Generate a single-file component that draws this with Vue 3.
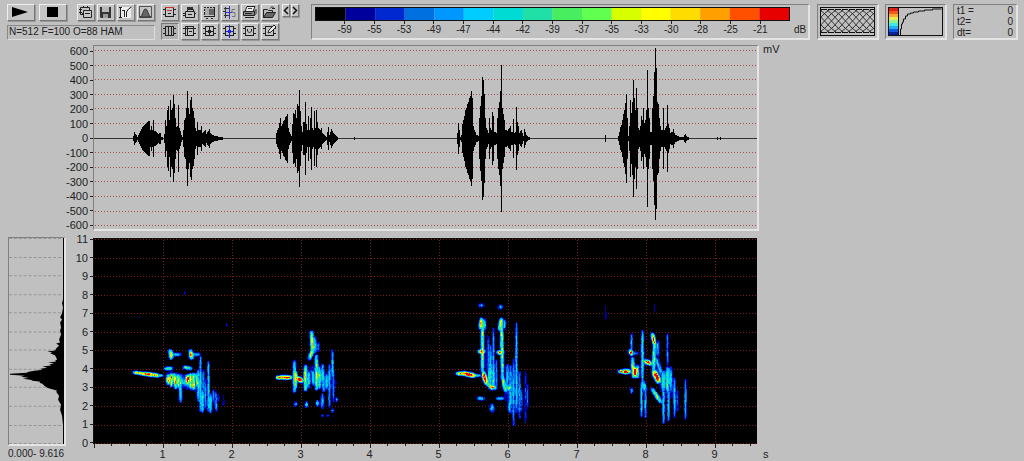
<script setup>
const palette = [
  '#000000', '#00009c', '#0028d0', '#0070e0', '#0098ff', '#00ccff', '#00dcd4', '#20e0a8',
  '#48ee60', '#60ff50', '#d8ff00', '#ffff00', '#ffdc00', '#ffa000', '#ff5000', '#e60000'
]
const levels = [-59, -55, -53, -49, -47, -44, -42, -39, -37, -35, -33, -30, -28, -25, -21]
const amplitudes = [600, 500, 400, 300, 200, 100, 0, -100, -200, -300, -400, -500, -600]
const frequencies = [11, 10, 9, 8, 7, 6, 5, 4, 3, 2, 1, 0]
const seconds = [1, 2, 3, 4, 5, 6, 7, 8, 9]

const ampY = amplitudes.map((_, i) => Math.round(50 + i * 14.6) + 0.5)
const freqY = frequencies.map((_, i) => Math.round(239 + i * 18.55) + 0.5)
const secX = seconds.map((s) => 94.5 + s * 69)
const ticks = Array.from({ length: 39 }, (_, i) => ({ x: Math.round(94 + i * 17.25) + 0.5, h: i % 4 === 0 ? 4 : 2 }))

// Envelope of each call: position, then half height.
const calls = [
  '133:2 134:6 135:4 137:1 139:5 141:9 143:12 145:14 147:16 149:17 150:8 151:12 152:8 153:18 154:7 156:6 158:4 160:5 161:1 163:0 164:4 165:18 166:12 167:28 168:32 169:18 170:38 171:28 172:30 173:43 174:34 175:20 176:11 177:12 178:33 179:10 180:7 181:3 182:1 183:8 184:18 185:20 186:30 187:47 188:30 189:24 190:38 191:41 192:30 193:27 194:20 195:10 196:7 197:16 198:8 200:8 201:12 202:5 205:8 206:4 209:9 210:5 212:3 215:2 219:1 226:0',
  '276:5 277:8 278:10 279:15 280:20 281:12 282:14 283:17 284:18 285:21 286:22 287:24 288:10 289:6 290:4 291:2 292:14 293:25 294:24 295:28 296:20 297:34 298:32 299:48 300:27 301:12 302:6 303:16 304:16 305:36 306:14 307:8 308:22 309:8 310:20 311:31 312:10 313:8 314:27 315:10 316:28 317:16 318:10 319:9 320:8 321:10 322:5 324:3 326:1 328:11 329:3 331:9 333:5 335:3 337:1 338:0',
  '354:1 355:0',
  '457:5 458:15 459:8 460:1 461:3 462:14 463:18 464:22 465:28 466:30 467:34 468:36 469:40 470:42 471:47 472:40 473:12 474:8 475:6 476:3 478:2 479:20 480:32 481:42 482:61 483:58 484:44 485:20 486:10 487:8 488:5 489:20 490:10 491:8 492:26 493:22 494:6 496:5 497:20 498:30 499:36 500:47 501:73 502:30 503:24 504:18 505:8 507:7 509:10 510:12 511:6 512:6 513:19 514:5 515:6 516:31 517:16 518:12 519:5 521:8 523:2 524:9 525:6 526:3 528:1 530:0',
  '604:0 605:3 606:0',
  '618:2 619:6 620:11 621:13 622:18 623:24 624:28 625:35 626:44 627:20 628:2 629:12 630:38 631:25 632:36 633:58 634:40 635:28 636:50 637:30 638:10 639:8 640:12 641:22 642:18 643:30 644:15 645:18 646:28 647:68 648:30 649:20 650:6 651:6 652:30 653:42 654:66 655:90 656:70 657:36 658:34 659:20 660:12 661:8 662:8 663:30 664:8 666:12 667:33 668:14 669:10 670:5 672:6 673:9 674:5 675:3 677:2 680:1 683:1 685:4 686:2 687:1 689:0',
  '716:0 717:1 718:0',
  '719:0 720:1 721:0'
]

function envelope(text) {
  const pts = text.split(' ').map((p) => p.split(':').map(Number))
  let d = ''
  for (let i = 0; i < pts.length; i++) {
    const [x, a] = pts[i]
    const next = pts[i + 1] || [x + 1, 0]
    for (let k = x; k < next[0]; k++) {
      const v = Math.round(a + ((next[1] - a) * (k - x)) / (next[0] - x))
      if (v > 0) d += `M${k} ${138 - v}h1v${v + Math.min(v, 81) + 1}h-1z`
    }
  }
  return d
}
const wave = calls.map(envelope).join('')

// Mean spectrum: row, then bar length.
const spectrumPoints = '239:1 300:1 304:2 308:1 314:2 318:4 320:2 323:4 328:3 331:4 335:3 340:5 343:4 344:8 346:5 349:8 351:9 352:17 353:12 354:14 355:11 356:9 358:8 360:7 361:9 362:8 363:16 364:10 365:15 366:13 367:22 368:17 369:24 370:22 371:30 372:36 373:38 374:55 375:55 376:40 377:44 378:36 379:42 380:34 381:32 382:24 383:25 384:22 386:20 388:17 389:14 390:10 391:7 392:8 396:5 400:6 405:3 410:4 416:2 425:1 444:1'
const spectrum = (() => {
  const pts = spectrumPoints.split(' ').map((p) => p.split(':').map(Number))
  let d = 'M65 239'
  for (const [y, w] of pts) d += `L${65 - w} ${y}`
  return d + 'L65 444z'
})()

// Sound traces: x1, y1, x2, y2, radius, strength.
const traces = [
  [134, 372, 142, 373, 1.6, 0.85], [142, 373, 157, 375, 1.7, 1.15], [157, 375, 162, 375, 1.3, 0.5],
  [170, 351, 171, 357, 2, 0.95], [172, 354, 179, 354, 1.8, 0.42], [190, 351, 191, 357, 2, 0.95], [192, 354, 198, 354, 1.8, 0.42],
  [165, 368, 171, 368, 1.7, 0.62], [184, 367, 190, 368, 1.7, 0.72], [168, 376, 168, 382, 2, 1.05], [171, 374, 171, 385, 1.4, 0.82],
  [174, 374, 175, 387, 1.5, 0.9], [178, 375, 178, 386, 1.5, 0.76], [180, 376, 180, 401, 1.5, 0.48], [187, 376, 187, 382, 1.9, 1.2],
  [190, 374, 190, 387, 1.4, 0.76], [193, 374, 193, 388, 1.5, 0.9], [196, 374, 197, 386, 1.6, 0.6], [198, 370, 198, 400, 1.5, 0.42],
  [200, 357, 200, 410, 1.3, 0.42], [202, 390, 202, 411, 1.4, 0.48], [203, 370, 203, 392, 1.6, 0.27], [205, 380, 205, 408, 1.4, 0.27],
  [208, 362, 208, 410, 1.3, 0.42], [210, 395, 210, 411, 1.6, 0.48], [213, 390, 213, 402, 1.5, 0.27], [215, 392, 216, 410, 1.6, 0.34],
  [218, 394, 218, 400, 1.4, 0.2], [223, 395, 223, 405, 1.3, 0.12], [171, 376, 196, 386, 5, 0.36],
  [277, 377, 290, 377, 1.7, 1.2], [294, 361, 294, 391, 1.6, 0.54], [295, 372, 295, 386, 1.8, 0.8], [297, 378, 301, 380, 2, 1.45],
  [305, 366, 305, 389, 1.7, 0.72], [308, 372, 308, 386, 2, 0.5], [311, 332, 312, 350, 1.7, 0.82], [314, 338, 314, 352, 2, 0.45],
  [312, 350, 309, 358, 1.9, 0.68], [318, 343, 318, 350, 1.5, 0.27], [316, 356, 316, 388, 1.7, 0.7], [319, 368, 319, 387, 1.8, 0.54],
  [312, 370, 313, 384, 1.6, 0.38], [322, 365, 323, 390, 1.7, 0.42], [326, 375, 326, 388, 1.8, 0.35], [329, 365, 329, 406, 1.4, 0.34],
  [332, 350, 332, 376, 1.4, 0.36], [333, 370, 333, 402, 1.3, 0.26], [295, 402, 295, 405, 1.6, 0.4], [306, 402, 306, 406, 1.6, 0.42],
  [317, 401, 317, 405, 1.6, 0.42], [322, 394, 322, 407, 1.6, 0.38], [336, 398, 336, 400, 1.6, 0.4], [332, 409, 332, 411, 1.5, 0.35],
  [322, 415, 322, 415, 1.7, 0.36], [327, 415, 328, 415, 1.4, 0.3], [312, 370, 331, 383, 6, 0.22],
  [457, 373, 462, 373, 1.7, 0.85], [463, 373, 474, 375, 1.9, 1.45], [475, 375, 480, 375, 1.3, 0.5], [480, 305, 482, 305, 2, 0.4],
  [499, 307, 501, 306, 2, 0.4], [480, 327, 481, 319, 1.8, 0.82], [482, 320, 482, 370, 1.6, 0.68], [484, 320, 484, 328, 1.8, 0.42],
  [479, 351, 483, 351, 1.8, 1.05], [483, 373, 486, 382, 2, 1.3], [486, 382, 492, 388, 1.9, 0.66], [490, 387, 494, 387, 2, 0.85],
  [499, 328, 501, 319, 1.8, 0.82], [501, 320, 502, 376, 1.6, 0.68], [504, 320, 504, 328, 1.5, 0.38], [498, 352, 502, 352, 1.8, 1.05],
  [502, 376, 505, 390, 1.9, 0.66], [508, 387, 510, 388, 2.2, 0.82], [478, 398, 483, 398, 1.8, 0.46], [497, 398, 502, 398, 1.6, 0.46],
  [491, 405, 492, 410, 2.2, 0.42], [490, 346, 490, 385, 1.6, 0.34], [493, 328, 493, 384, 1.2, 0.32], [488, 336, 488, 375, 1.6, 0.24],
  [493, 368, 493, 386, 1.7, 0.46], [489, 370, 489, 382, 1.8, 0.48], [496, 360, 496, 388, 1.3, 0.26], [507, 365, 507, 384, 1.8, 0.36],
  [510, 366, 510, 411, 1.6, 0.34], [509, 402, 509, 411, 1.5, 0.42], [513, 360, 513, 424, 1.4, 0.34], [516, 323, 516, 412, 1.2, 0.42],
  [519, 372, 519, 417, 1.5, 0.3], [521, 390, 521, 410, 1.4, 0.22], [525, 370, 525, 422, 1.2, 0.2], [527, 385, 527, 407, 1.2, 0.24],
  [489, 350, 492, 383, 5, 0.18], [510, 385, 515, 405, 8, 0.2],
  [619, 371, 622, 371, 1.7, 0.85], [623, 371, 628, 371, 2, 1.45], [631, 334, 631, 350, 1.3, 0.36], [630, 351, 631, 353, 2, 1.3],
  [633, 353, 637, 353, 1.6, 0.34], [632, 358, 633, 376, 1.7, 0.7], [634, 368, 635, 375, 2.1, 1.2], [637, 366, 637, 376, 1.7, 0.66],
  [631, 388, 631, 392, 1.5, 0.35], [642, 331, 642, 382, 1.4, 0.48], [643, 383, 644, 389, 2.4, 0.54], [641, 383, 641, 416, 1.3, 0.4],
  [645, 390, 645, 416, 1.3, 0.38], [645, 361, 650, 363, 2, 1.25], [652, 334, 654, 343, 1.7, 0.98], [654, 343, 653, 370, 1.7, 0.62],
  [657, 342, 657, 354, 2, 0.36], [654, 372, 658, 380, 2.4, 1.4], [652, 389, 660, 401, 1.9, 0.66], [656, 358, 660, 372, 2, 0.42],
  [663, 372, 663, 390, 2, 0.5], [667, 368, 667, 390, 1.8, 0.56], [667, 334, 667, 364, 1.2, 0.3], [670, 368, 670, 387, 2, 0.36],
  [663, 390, 663, 422, 1.4, 0.42], [668, 390, 668, 420, 1.4, 0.38], [674, 378, 674, 416, 1.3, 0.38], [685, 380, 685, 418, 1.3, 0.36],
  [677, 390, 677, 410, 1.4, 0.2], [664, 376, 669, 392, 7, 0.24], [605, 305, 605, 320, 1.3, 0.12], [654, 304, 654, 312, 1.3, 0.1],
  [646, 279, 646, 281, 1.3, 0.1], [184, 291, 184, 295, 1.4, 0.12], [138, 316, 140, 318, 1.4, 0.1], [226, 322, 226, 326, 1.4, 0.12]
]

function noise(x, y) {
  let n = (x * 374761393 + y * 668265263) | 0
  n = Math.imul(n ^ (n >>> 13), 1274126177)
  return ((n ^ (n >>> 16)) >>> 0) / 4294967296
}

const heatPaths = (() => {
  const x0 = 94, y0 = 239, w = 663, h = 205
  const field = new Float32Array(w * h)
  for (const [ax, ay, bx, by, r, s] of traces) {
    const m = Math.ceil(r * 2.4)
    const dx = bx - ax, dy = by - ay, len = dx * dx + dy * dy || 1
    for (let y = Math.min(ay, by) - m; y <= Math.max(ay, by) + m; y++) {
      for (let x = Math.min(ax, bx) - m; x <= Math.max(ax, bx) + m; x++) {
        const t = Math.max(0, Math.min(1, ((x - ax) * dx + (y - ay) * dy) / len))
        const ex = x - ax - t * dx, ey = y - ay - t * dy
        const taper = 1 - 0.4 * Math.pow(Math.abs(t - 0.5) * 2, 3)
        const grain = 0.5 + 0.3 * noise(x, y >> 1) + 0.32 * noise(x >> 1, (y >> 2) + 900)
        const v = s * taper * grain * Math.exp((-0.9 * (ex * ex + ey * ey)) / (r * r))
        const i = (y - y0) * w + (x - x0)
        field[i] = Math.max(field[i], v) + Math.min(field[i], v) * 0.2
      }
    }
  }
  const level = (i) => Math.min(15, Math.floor(field[i] * 17))
  const paths = palette.map(() => '')
  for (let y = 0; y < h; y++) {
    let x = 0
    while (x < w) {
      const c = level(y * w + x)
      let e = x + 1
      while (e < w && level(y * w + e) === c) e++
      if (c > 0) paths[c] += `M${x + x0} ${y + y0}h${e - x}v1h${x - e}z`
      x = e
    }
  }
  return paths.map((d, i) => ({ d, fill: palette[i] })).filter((p) => p.d)
})()

const frame = 'M3 2.5h9M3 11.5h9M3.5 2v10M11.5 2v10M1 4.5h2M1 9.5h2M12 4.5h2M12 9.5h2'
const fileTools = [
  { name: 'Copy', parts: [{ d: 'M2.5 2.5h9v7h-9z', s: '#222' }, { d: 'M5.5 5.5h8v7h-8z', f: '#c8c8c8', s: '#222' }, { d: 'M1 4.5h3M1 7.5h3M5.5 1v2M9.5 1v2M7 8.5h5M4 8.5h2' , s: '#222' }] },
  { name: 'Save', parts: [{ d: 'M2 2h11v11H3l-1-1z', f: '#333' }, { d: 'M4 2h7v5H4z', f: '#b8b8b8' }, { d: 'M5 9h5v4H5z', f: '#999' }] },
  { name: 'Transfer curve', parts: [{ d: 'M2 2h11v11H2z', f: '#eee' }, { d: 'M2.5 2v11M1 2.5h3M1 12.5h3M4 5.5h3M6.5 6v6M8.5 12V7l2-3 3-2', s: '#222' }] },
  { name: 'Envelope', parts: [{ d: 'M1.5 1.5h12v11h-12z', s: '#555' }, { d: 'M2 12c3-1 3-8 5.5-8s2.5 7 5.5 8z', f: '#666', s: '#333' }] }
]
const viewTools = [
  { name: 'Cut section', parts: [{ d: frame, s: '#222' }, { d: 'M3 2.5h9M5 5.5h5', s: '#c33' }, { d: 'M6 8.5h3', s: '#222' }] },
  { name: 'Paste section', parts: [{ d: 'M3.5 6.5h9v6h-9zM5.5 4.5h6v2h-6z', s: '#222' }, { d: 'M5 2h6v2H5z', f: '#333' }, { d: 'M1 8.5h2M1 10.5h2M6 9.5h4M12 8.5h2', s: '#222' }] },
  { name: 'Select area', parts: [{ d: 'M3 3h9v7H3z', f: '#aaa' }, { d: 'M7 4h5v6H7z', f: '#666' }, { d: 'M2 2.5h2m1 0h2m1 0h2m1 0h2M2.5 4v2m0 1v3M12.5 3v8M2 11.5h11M4 13.5h2m3 0h2', s: '#222' }] },
  { name: 'Synchronise', parts: [{ d: 'M2 3.5h5M2 10.5h5M3.5 2v11M1 6.5h2', s: '#333' }, { d: 'M7.5 1v13M3 7.5h7', s: '#33c' }, { d: 'M13 4.5h-3v3h3v4h-3', s: '#777' }] },
  { name: 'Print', parts: [{ d: 'M5 1.5h8l-2 5H3z', f: '#eee', s: '#222' }, { d: 'M6 3.5h4', s: '#444' }, { d: 'M1.5 6.5h11v4h-11z', f: '#888', s: '#222' }, { d: 'M12 6.5l2-2v4l-2 2M3 8.5h7M3 12.5h9', s: '#222' }] },
  { name: 'Open', parts: [{ d: 'M1.5 12.5v-8h4l1 1h4v2', f: '#bbb', s: '#222' }, { d: 'M1.5 12.5l3-5h9l-3 5z', f: '#666', s: '#222' }, { d: 'M8 3.5c2-3 4-1 4 0M10 3.5h3', s: '#222' }] }
]
const markTools = [
  { name: 'Time markers', on: true, parts: [{ d: frame + 'M6.5 2v10M9.5 2v10', s: '#222' }] },
  { name: 'Frequency markers', parts: [{ d: frame + 'M3 4.5h9M5.5 3v9M7 7.5h3', s: '#222' }] },
  { name: 'Cross cursor', parts: [{ d: frame + 'M7.5 2v10M4 7.5h8M6 6.5h3M6 8.5h3', s: '#222' }] },
  { name: 'Free cursor', parts: [{ d: frame, s: '#222' }, { d: 'M7.5 1v13M4 7.5h7M6 6.5h3M6 8.5h3', s: '#22d' }] },
  { name: 'Label', parts: [{ d: frame + 'M5.5 5v2l2 2 2-2V5', s: '#222' }] },
  { name: 'Edit label', parts: [{ d: frame, s: '#222' }, { d: 'M6 9l1-3 5-5 2 2-5 5z', f: '#eee', s: '#222' }] }
]
const mesh = Array.from({ length: 15 }, (_, i) => i * 7 - 28)
const rainbow = ['#d82018', '#f05820', '#f8a830', '#e8e850', '#90f090', '#40e8e0', '#20b0f8', '#1058e0', '#082098']
</script>

<template>
  <main class="app">
    <header class="toolbar">
      <div class="transport">
        <div class="row">
          <button class="btn wide" aria-label="Play">
            <svg width="24" height="14" viewBox="0 0 24 14"><path d="M4 2l16 5L4 12z" /></svg>
          </button>
          <button class="btn wide" aria-label="Stop">
            <svg width="24" height="14" viewBox="0 0 24 14"><path d="M7 2h11v10H7z" /></svg>
          </button>
          <div class="files">
            <button v-for="t in fileTools" :key="t.name" class="btn" :aria-label="t.name">
              <svg width="15" height="14" viewBox="0 0 15 14"><path v-for="(p, i) in t.parts" :key="i" :d="p.d" :fill="p.f || 'none'" :stroke="p.s || 'none'" /></svg>
            </button>
          </div>
        </div>
        <output class="status">N=512 F=100 O=88 HAM</output>
      </div>

      <div class="views">
        <div class="tools">
          <button v-for="t in viewTools" :key="t.name" class="btn" :aria-label="t.name">
            <svg width="15" height="14" viewBox="0 0 15 14"><path v-for="(p, i) in t.parts" :key="i" :d="p.d" :fill="p.f || 'none'" :stroke="p.s || 'none'" /></svg>
          </button>
        </div>
        <div class="tools">
          <button v-for="t in markTools" :key="t.name" class="btn" :class="{ on: t.on }" :aria-label="t.name">
            <svg width="15" height="14" viewBox="0 0 15 14"><path v-for="(p, i) in t.parts" :key="i" :d="p.d" :fill="p.f || 'none'" :stroke="p.s || 'none'" /></svg>
          </button>
        </div>
      </div>
      <nav class="steps">
        <button class="btn slim" aria-label="Previous"><svg width="6" height="11" viewBox="0 0 6 11"><path d="M5 2L1.5 5.5 5 9" fill="none" stroke="#111" stroke-width="1.5" /></svg></button>
        <button class="btn slim" aria-label="Next"><svg width="6" height="11" viewBox="0 0 6 11"><path d="M1 2l3.5 3.5L1 9" fill="none" stroke="#111" stroke-width="1.5" /></svg></button>
      </nav>

      <section class="sunken scale">
        <div class="colours">
          <svg viewBox="0 0 16 1" preserveAspectRatio="none"><rect v-for="(c, i) in palette" :key="c" :x="i" y="0" width="1" height="1" :fill="c" /></svg>
        </div>
        <div class="levels"><span v-for="l in levels" :key="l">{{ l }}</span></div>
        <span class="unit">dB</span>
      </section>

      <section class="sunken preview">
        <svg width="55" height="29" viewBox="0 0 55 29">
          <g fill="none" stroke="#333">
            <path v-for="m in mesh" :key="m" :d="`M${m} 3l5 4 13 14 5 4M${m + 23} 3l-5 4-13 14-5 4`" />
            <path d="M1 2.5h53M1 25.5h53" stroke="#111" stroke-dasharray="6 1" />
            <rect x=".5" y=".5" width="54" height="28" stroke="#111" />
          </g>
        </svg>
      </section>

      <section class="sunken preview">
        <svg width="55" height="29" viewBox="0 0 55 29">
          <rect v-for="(c, i) in rainbow" :key="c" x="1" :y="1 + i * 3" width="9" height="3" :fill="c" />
          <path d="M10.5 0v29M12.5 28V22h1v-5h1v-2h1v-3h2V9h2V7h3V6h3V5h5V4h6V3h8V2h9" fill="none" stroke="#111" />
          <rect x=".5" y=".5" width="54" height="28" fill="none" stroke="#111" />
        </svg>
      </section>

      <dl class="sunken readout">
        <dt>t1 =</dt><dd>0</dd>
        <dt>t2=</dt><dd>0</dd>
        <dt>dt=</dt><dd>0</dd>
      </dl>
    </header>

    <div class="charts">
      <div class="axis amp"><span v-for="a in amplitudes" :key="a">{{ a }}</span></div>
      <figure class="sunken wave" aria-label="Waveform">
        <svg viewBox="94 46 663 183" preserveAspectRatio="none">
          <path v-for="y in ampY" :key="y" :d="`M95 ${y}H757`" class="dots" />
          <path d="M94 138.5H757" stroke="#333" />
          <path :d="wave" shape-rendering="crispEdges" />
        </svg>
      </figure>
      <span class="mv">mV</span>

      <figure class="sunken mean" aria-label="Mean spectrum">
        <svg viewBox="9 239 56 205" preserveAspectRatio="none">
          <path v-for="y in freqY" :key="y" :d="`M9 ${y}H64`" stroke="#969696" stroke-dasharray="3 2" />
          <path :d="spectrum" />
        </svg>
      </figure>
      <div class="axis freq"><span v-for="f in frequencies" :key="f">{{ f }}</span></div>
      <figure class="sono" aria-label="Spectrogram">
        <svg viewBox="94 239 663 205" preserveAspectRatio="none">
          <path v-for="y in freqY" :key="y" :d="`M95 ${y}H757`" class="grid" />
          <path v-for="x in secX" :key="x" :d="`M${x} 240V444`" class="grid" />
          <path v-for="p in heatPaths" :key="p.fill" :d="p.d" :fill="p.fill" shape-rendering="crispEdges" />
        </svg>
      </figure>

      <span class="range">0.000- 9.616</span>
      <div class="time">
        <svg viewBox="94 0 663 4" preserveAspectRatio="none"><path v-for="t in ticks" :key="t.x" :d="`M${t.x} 0v${t.h}`" stroke="#222" /></svg>
        <div class="secs"><span v-for="s in seconds" :key="s">{{ s }}</span></div>
      </div>
      <span class="sec-unit">s</span>
    </div>
  </main>
</template>

<style>
body { background: #c0c0c0; }
</style>

<style scoped>
.app { color: #222; font: 11px/14px "Liberation Sans", Arial, sans-serif; overflow: hidden; }
.app svg { display: block; }
.toolbar { display: flex; align-items: flex-start; padding: 4px 6px 0 7px; height: 40px; box-sizing: border-box; font-size: 10px; }
.btn { box-sizing: border-box; display: grid; place-items: start; width: 18px; height: 17px; padding: 0; background: #c4c4c4; border: 1px solid; border-color: #eee #777 #777 #eee; box-shadow: 1px 1px 0 #999; border-radius: 0; }
.btn.wide { width: 28px; margin-right: 4px; }
.btn.slim { width: 8px; height: 13px; }
.btn.on { background: #b2b2b2; border-color: #777 #ddd #ddd #777; box-shadow: none; }
.transport { width: 148px; flex: none; }
.row { display: flex; }
.files { display: flex; gap: 2px; margin-left: auto; }
.status { box-sizing: border-box; display: block; margin-top: 4px; height: 15px; padding-left: 1px; line-height: 12px; border: 1px solid; border-color: #888 #ddd #ddd #888; white-space: nowrap; }
.views { display: grid; gap: 2px; margin-left: 6px; flex: none; }
.tools { display: flex; gap: 2px; }
.steps { display: flex; gap: 1px; margin-left: 3px; flex: none; }
.sunken { box-sizing: border-box; border: solid; border-width: 1px 2px 2px 1px; border-color: #808080 #e4e4e4 #e4e4e4 #808080; }
.scale { flex: 1; min-width: 0; height: 36px; margin: 0 7px 0 12px; display: grid; grid-template-columns: 1fr 18px; grid-template-rows: 15px 18px; padding-left: 3px; }
.colours { box-sizing: border-box; height: 14px; margin-top: 2px; border: 1px solid #111; }
.colours svg { width: 100%; height: 12px; }
.levels { grid-row: 2; display: grid; grid-template-columns: 1fr repeat(15, 2fr) 1fr; padding-top: 1px; }
.levels span { text-align: center; line-height: 12px; }
.levels span:first-child { grid-column: 2; }
.levels span::before { content: ""; display: block; width: 1px; height: 3px; margin: 0 auto; background: #222; }
.unit { grid-row: 2; grid-column: 2; padding: 4px 0 0 4px; line-height: 12px; }
.preview { width: 62px; height: 36px; padding: 2px 0 0 2px; margin-right: 6px; flex: none; }
.readout { width: 65px; height: 36px; margin: 0; padding: 0 3px; display: grid; grid-template-columns: 1fr auto; line-height: 11px; flex: none; }
.readout dd { margin: 0; }
.charts { display: grid; grid-template-columns: 58px 27px minmax(0, 666fr) minmax(0, 265fr); grid-template-rows: 188px 218px 13px; padding-left: 8px; margin-top: 4px; }
figure { margin: 0; min-width: 0; }
figure svg { width: 100%; height: 100%; }
.axis { display: flex; flex-direction: column; justify-content: space-between; text-align: right; }
.axis span { display: flex; align-items: center; justify-content: flex-end; gap: 2px; height: 14px; }
.axis span::after { content: ""; width: 3px; height: 1px; background: #222; }
.amp { grid-column: 2; }
.wave { margin: 1px 0; }
.mv { padding: 0 4px; line-height: 10px; }
.dots { stroke: #a85050; stroke-dasharray: 1 2; }
.mean { margin: 5px 0 4px; }
.sono { box-sizing: border-box; margin: 6px 2px 6px 0; background: #000; border: solid #111; border-width: 1px 0 0 1px; }
.grid { stroke: #7c1c1c; stroke-dasharray: 1 2; }
.range { grid-column: 1 / 3; font-size: 10px; line-height: 8px; white-space: nowrap; }
.time { margin: -6px 2px 0 1px; }
.time svg { width: 100%; height: 4px; }
.secs { display: grid; grid-template-columns: 34fr repeat(9, 69fr) 8fr; text-align: center; line-height: 12px; }
.secs span:first-child { grid-column: 2; }
.sec-unit { padding: 0 4px; line-height: 8px; }
</style>
